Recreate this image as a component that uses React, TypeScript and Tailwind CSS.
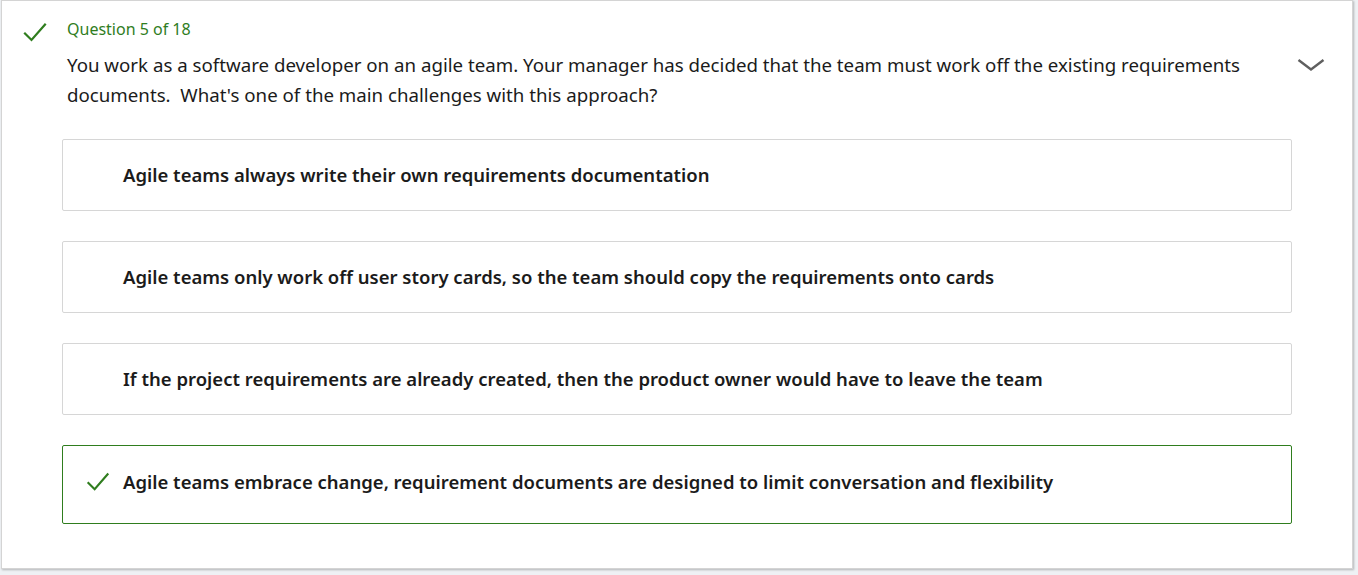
import React from "react";

const options = [
  { text: "Agile teams always write their own requirements documentation", correct: false },
  {
    text: "Agile teams only work off user story cards, so the team should copy the requirements onto cards",
    correct: false,
  },
  {
    text: "If the project requirements are already created, then the product owner would have to leave the team",
    correct: false,
  },
  {
    text: "Agile teams embrace change, requirement documents are designed to limit conversation and flexibility",
    correct: true,
  },
];

function Check({ className }: { className?: string }) {
  return (
    <svg viewBox="0 0 24 24" className={className} fill="none">
      <path d="M2 12.5 L8.5 19 L22 3.5" stroke="#2f7d1e" strokeWidth="2.2" strokeLinecap="square" />
    </svg>
  );
}

export default function App() {
  return (
    <div className="h-[575px] w-[1358px] bg-[#eef1f4] font-['Noto_Sans',sans-serif] text-[#1b1b1b]">
      <div className="ml-px h-[569px] w-[1352px] border border-[#d4d4d4] bg-white shadow-[1px_1px_2px_rgba(0,0,0,0.25)]">
        <div className="flex pt-[17px]">
          <div className="w-[65px] pl-[20px] pt-[3px]">
            <Check className="h-[24px] w-[26px]" />
          </div>
          <div className="flex-1">
            <div className="text-[16px] leading-[22px] text-[#2f7d1e]">Question 5 of 18</div>
            <div className="flex">
              <p className="mt-[10px] w-[1200px] text-[18.7px] leading-[30px]">
                You work as a software developer on an agile team. Your manager has decided that the team must work off the
                existing requirements documents.&nbsp; What's one of the main challenges with this approach?
              </p>
              <svg viewBox="0 0 28 14" className="ml-[30px] mt-[18px] h-[14px] w-[28px]" fill="none">
                <path d="M1.5 2 L14 11.5 L26.5 2" stroke="#5f5f5f" strokeWidth="2.4" />
              </svg>
            </div>
          </div>
        </div>
        <div className="ml-[60px] mt-[29px] flex w-[1230px] flex-col gap-[30px]">
          {options.map((o) => (
            <div
              key={o.text}
              className={
                o.correct
                  ? "flex h-[79px] items-center rounded-[2px] border border-[#2f7d1e] pb-[5px] pl-[23px]"
                  : "flex h-[72px] items-center rounded-[2px] border border-[#d6d6d6] pl-[60px]"
              }
            >
              {o.correct && <Check className="mr-[13px] h-[23px] w-[24px]" />}
              <span className="text-[18.5px] font-semibold">{o.text}</span>
            </div>
          ))}
        </div>
      </div>
    </div>
  );
}
